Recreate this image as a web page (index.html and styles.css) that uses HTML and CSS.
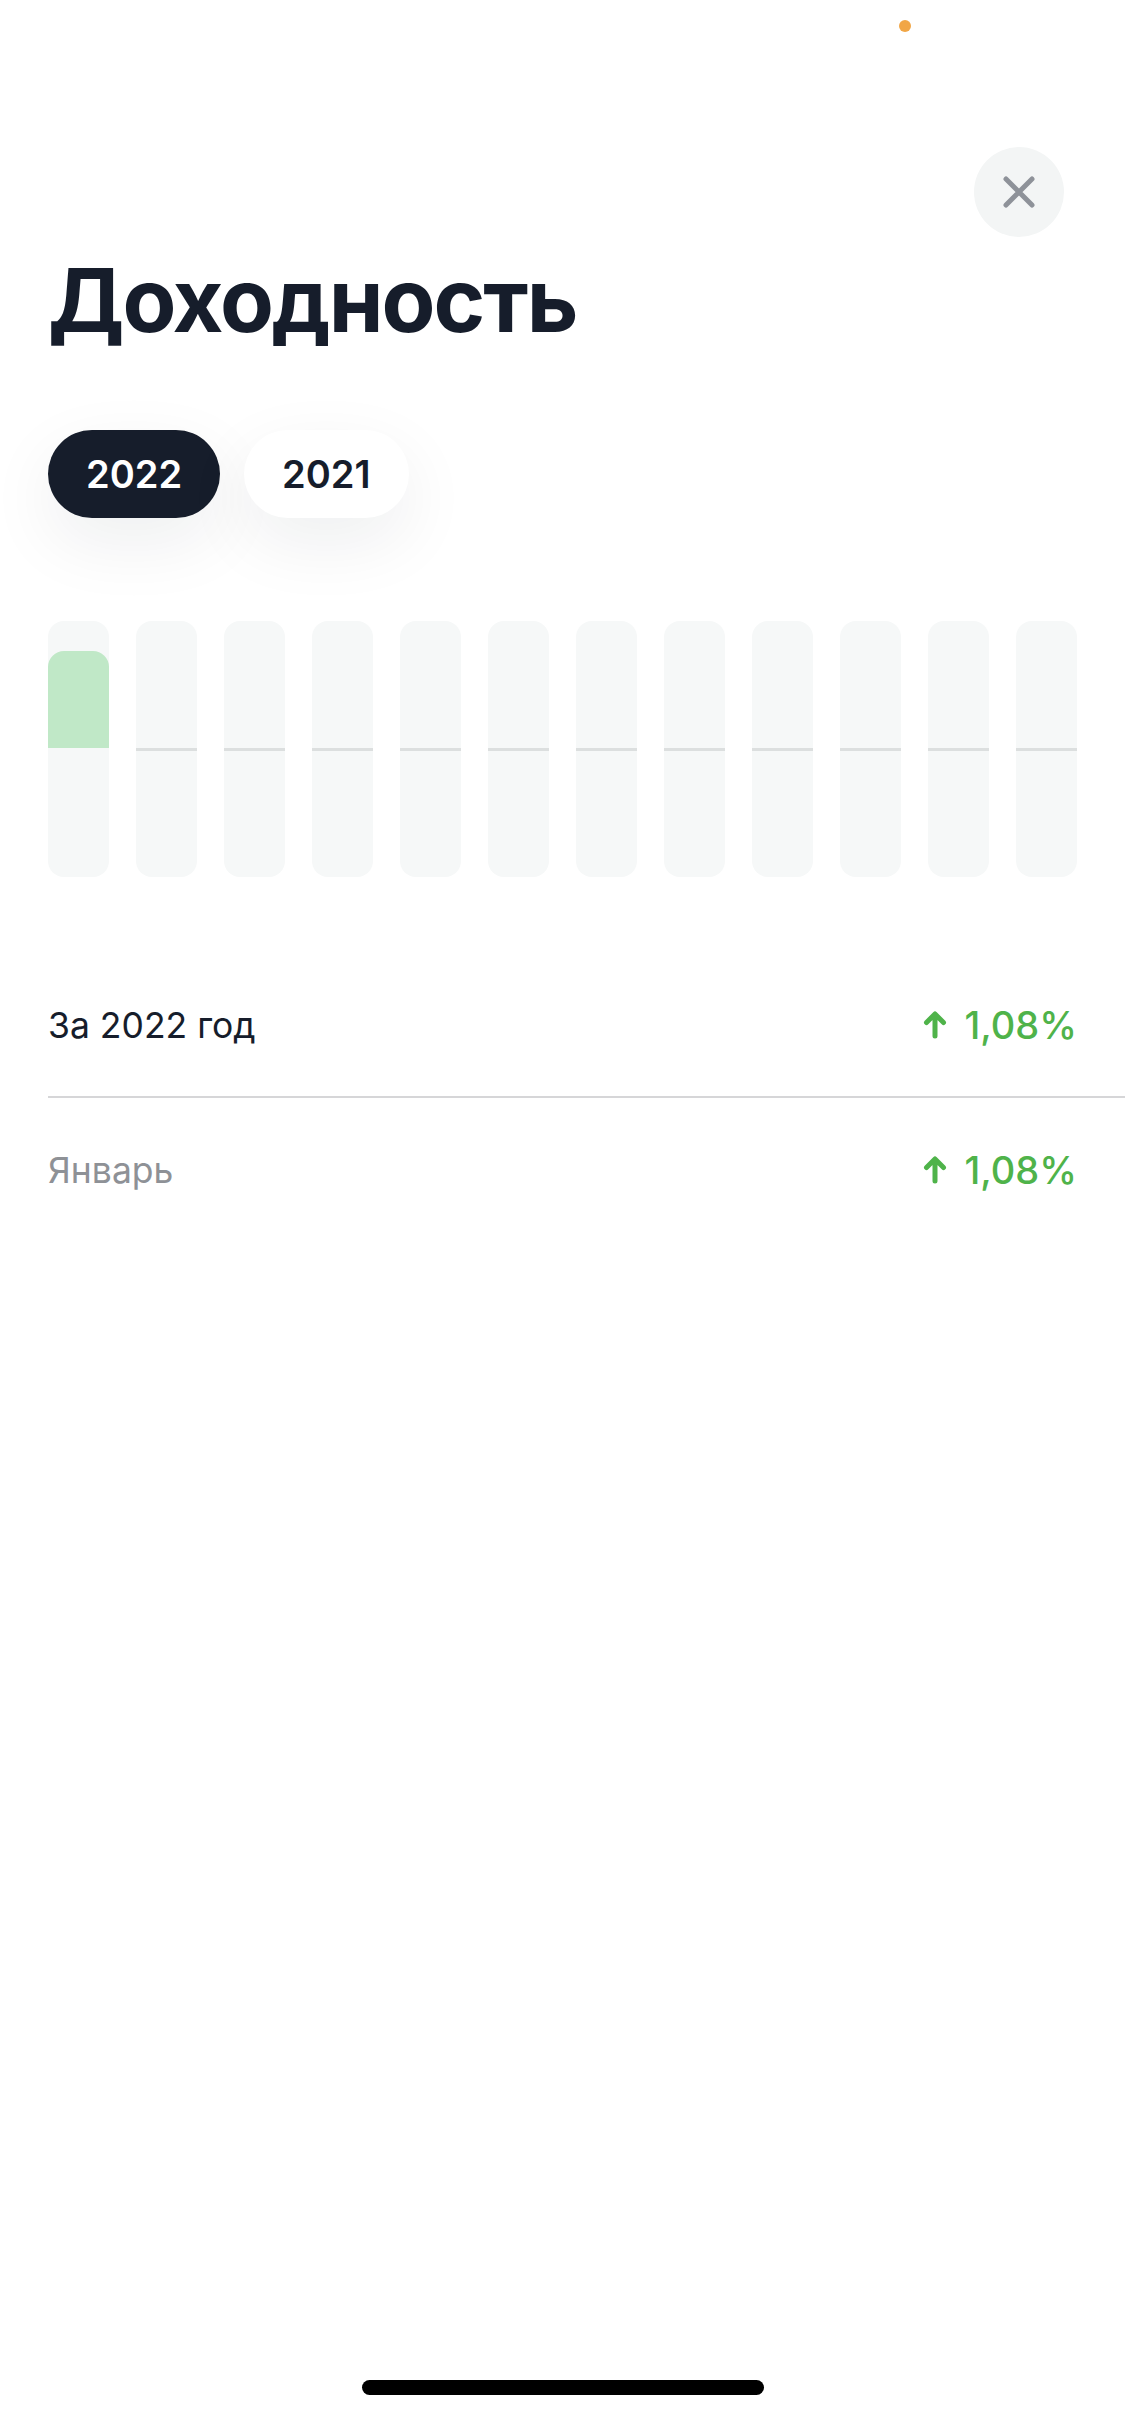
FILE: index.html
```html
<!DOCTYPE html>
<html lang="ru">
<head>
<meta charset="utf-8">
<title>Доходность</title>
<link rel="stylesheet" href="styles.css">
</head>
<body>
<div class="screen">
  <div class="status"><span class="dot"></span></div>
  <div class="sheet">
    <div class="topbar">
      <button class="close" aria-label="Закрыть">
        <svg width="32" height="32" viewBox="0 0 32 32"><path d="M3 3L29 29M29 3L3 29" stroke="#8e9299" stroke-width="5" stroke-linecap="round"/></svg>
      </button>
    </div>
    <h1 class="title">Доходность</h1>
    <div class="pills">
      <button class="pill pill-active">2022</button>
      <button class="pill">2021</button>
    </div>
    <div class="chart">
      <div class="bar"><div class="upper"><div class="fill" style="height:97px"></div></div><div class="lower"></div></div>
      <div class="bar"><div class="upper"></div><div class="zero"></div><div class="lower"></div></div>
      <div class="bar"><div class="upper"></div><div class="zero"></div><div class="lower"></div></div>
      <div class="bar"><div class="upper"></div><div class="zero"></div><div class="lower"></div></div>
      <div class="bar"><div class="upper"></div><div class="zero"></div><div class="lower"></div></div>
      <div class="bar"><div class="upper"></div><div class="zero"></div><div class="lower"></div></div>
      <div class="bar"><div class="upper"></div><div class="zero"></div><div class="lower"></div></div>
      <div class="bar"><div class="upper"></div><div class="zero"></div><div class="lower"></div></div>
      <div class="bar"><div class="upper"></div><div class="zero"></div><div class="lower"></div></div>
      <div class="bar"><div class="upper"></div><div class="zero"></div><div class="lower"></div></div>
      <div class="bar"><div class="upper"></div><div class="zero"></div><div class="lower"></div></div>
      <div class="bar"><div class="upper"></div><div class="zero"></div><div class="lower"></div></div>
    </div>
    <div class="list">
      <div class="row row-total">
        <span class="label">За 2022 год</span>
        <span class="value"><svg class="arrow" width="24" height="28" viewBox="0 0 24 28"><path d="M12 25V4M3.5 11.5L12 3L20.5 11.5" fill="none" stroke="#4fb34a" stroke-width="5" stroke-linecap="round" stroke-linejoin="round"/></svg>1,08%</span>
      </div>
      <div class="row">
        <span class="label label-muted">Январь</span>
        <span class="value"><svg class="arrow" width="24" height="28" viewBox="0 0 24 28"><path d="M12 25V4M3.5 11.5L12 3L20.5 11.5" fill="none" stroke="#4fb34a" stroke-width="5" stroke-linecap="round" stroke-linejoin="round"/></svg>1,08%</span>
      </div>
    </div>
  </div>
  <div class="home"><span class="indicator"></span></div>
</div>
</body>
</html>
```
FILE: styles.css
```css
* { box-sizing: border-box; }
html, body { margin: 0; padding: 0; background: #ffffff; }
body { font-family: Inter, "Noto Sans", sans-serif; color: #161d2b; }
.screen {
  width: 1125px;
  height: 2436px;
  display: flex;
  flex-direction: column;
  background: #ffffff;
}
.status {
  height: 147px;
  display: flex;
  justify-content: flex-end;
  align-items: flex-start;
  padding: 20px 214px 0 0;
}
.dot {
  width: 12px;
  height: 12px;
  border-radius: 50%;
  background: #f1a646;
}
.sheet {
  flex: 1;
  padding-left: 48px;
  display: flex;
  flex-direction: column;
}
.topbar {
  display: flex;
  justify-content: flex-end;
  padding-right: 61px;
}
.close {
  width: 90px;
  height: 90px;
  border-radius: 50%;
  border: 0;
  padding: 0;
  background: #f3f5f5;
  display: flex;
  align-items: center;
  justify-content: center;
}
.title {
  margin: 10px 0 0;
  font-size: 88px;
  line-height: 106px;
  font-weight: 700;
  letter-spacing: -2px;
  color: #161d2b;
}
.pills {
  margin-top: 77px;
  display: flex;
  gap: 24px;
}
.pill {
  height: 88px;
  border: 0;
  border-radius: 44px;
  padding: 0 38px;
  font-family: Inter, "Noto Sans", sans-serif;
  font-size: 38px;
  font-weight: 600;
  background: #ffffff;
  color: #161d2b;
  box-shadow: 0 24px 70px rgba(20, 30, 40, 0.07);
}
.pill-active {
  background: #161d2b;
  color: #ffffff;
}
.chart {
  margin-top: 103px;
  width: 1029px;
  height: 256px;
  display: flex;
  justify-content: space-between;
}
.bar {
  width: 61px;
  height: 256px;
  border-radius: 16px;
  background: #f6f8f8;
  display: flex;
  flex-direction: column;
  overflow: hidden;
}
.upper {
  height: 127px;
  display: flex;
  flex-direction: column;
  justify-content: flex-end;
}
.fill {
  background: #c0e8c7;
  border-radius: 16px 16px 0 0;
}
.zero {
  height: 3px;
  background: #dcdfdf;
}
.lower { flex: 1; }
.list {
  margin-top: 77px;
  display: flex;
  flex-direction: column;
}
.row {
  height: 144px;
  display: flex;
  align-items: center;
  justify-content: space-between;
  padding-right: 48px;
}
.row-total { border-bottom: 2px solid #d6d6d8; }
.label {
  font-size: 35.5px;
  color: #161d2b;
}
.label-muted { color: #8e9196; }
.value {
  display: flex;
  align-items: center;
  gap: 18px;
  font-size: 38px;
  font-weight: 500;
  color: #4fb34a;
}
.home {
  height: 56px;
  display: flex;
  justify-content: center;
  align-items: flex-start;
}
.indicator {
  width: 402px;
  height: 15px;
  border-radius: 8px;
  background: #000000;
}
```
